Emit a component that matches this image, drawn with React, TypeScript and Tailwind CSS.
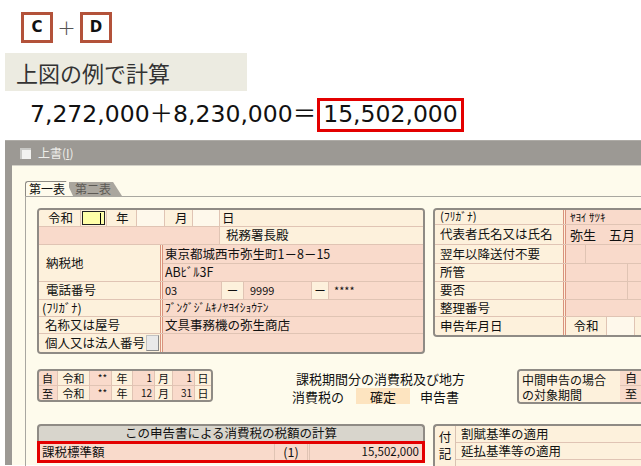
import React from 'react';

const jp = "font-['Noto_Sans_CJK_JP',sans-serif]";

function Cell({ className = '', children }: { className?: string; children?: React.ReactNode }) {
  return <div className={`flex items-center shrink-0 border-r border-[#e0c4b4] ${className}`}>{children}</div>;
}

function TaxpayerBox() {
  return (
    <div className="w-[388px] shrink-0 border-2 border-[#8f8b85] rounded-[4px] overflow-hidden text-[12.5px] leading-none bg-[#f9dacb]">
      {/* 令和 年 月 日 */}
      <div className="flex h-[17px] border-b border-[#e0c4b4]">
        <Cell className="w-[42px] pl-[9px] bg-[#fdf1dc]">令和</Cell>
        <Cell className="w-[26px] p-[1px] bg-[#fdf1dc]">
          <div className="w-full h-full bg-[#ffffa8] border border-[#222] flex justify-end items-center pr-[3px]">
            <div className="w-px h-[11px] bg-black" />
          </div>
        </Cell>
        <Cell className="w-[30px] pl-[9px] bg-[#fdf1dc]">年</Cell>
        <Cell className="w-[28px] bg-[#fef8eb]" />
        <Cell className="w-[28px] pl-[10px] bg-[#fdf1dc]">月</Cell>
        <Cell className="w-[27px] bg-[#fef8eb]" />
        <div className="flex-1 flex items-center pl-[2px] bg-[#fdf1dc]">日</div>
      </div>
      <div className="flex h-[18px] border-b border-[#e0c4b4]">
        <Cell className="w-[181px]" />
        <div className="flex-1 flex items-center pl-[6px] bg-[#fdf1dc]">税務署長殿</div>
      </div>
      {/* 納税地 */}
      <div className="flex h-[37px] border-b border-[#e0c4b4]">
        <div className="w-[124px] shrink-0 flex items-center pl-[7px] bg-[#fdf1dc] border-r-[3px] border-double border-[#d9927d]">納税地</div>
        <div className="flex-1 flex flex-col">
          <div className="h-[19px] flex items-center pl-[2px] border-b border-[#e0c4b4]">東京都城西市弥生町1－8－15</div>
          <div className="h-[18px] flex items-center pl-[2px]">ABﾋﾞﾙ3F</div>
        </div>
      </div>
      <div className="flex h-[18px] border-b border-[#e0c4b4]">
        <div className="w-[124px] shrink-0 flex items-center pl-[7px] bg-[#fdf1dc] border-r-[3px] border-double border-[#d9927d]">電話番号</div>
        <Cell className="w-[59px] pl-[2px] text-[11px]">03</Cell>
        <Cell className="w-[22px] justify-center bg-[#fdf1dc]">－</Cell>
        <Cell className="w-[68px] pl-[6px] text-[11px]">9999</Cell>
        <Cell className="w-[17px] justify-center bg-[#fdf1dc]">－</Cell>
        <div className="flex-1 flex items-center pl-[5px] text-[11px]">****</div>
      </div>
      <div className="flex h-[17px] border-b border-[#e0c4b4]">
        <div className="w-[124px] shrink-0 flex items-center pl-[3px] bg-[#fdf1dc] border-r-[3px] border-double border-[#d9927d]">(ﾌﾘｶﾞﾅ)</div>
        <div className="flex-1 flex items-center pl-[2px] text-[11.5px]">ﾌﾞﾝｸﾞｼﾞﾑｷﾉﾔﾖｲｼｮｳﾃﾝ</div>
      </div>
      <div className="flex h-[17px] border-b border-[#e0c4b4]">
        <div className="w-[124px] shrink-0 flex items-center pl-[6px] bg-[#fdf1dc] border-r-[3px] border-double border-[#d9927d]">名称又は屋号</div>
        <div className="flex-1 flex items-center pl-[2px]">文具事務機の弥生商店</div>
      </div>
      <div className="flex h-[18px]">
        <div className="w-[124px] shrink-0 flex items-center justify-between pl-[6px] pr-[1px] bg-[#fdf1dc] border-r-[3px] border-double border-[#d9927d]">
          <span>個人又は法人番号</span>
          <div className="w-[13px] h-[16px] bg-[#e9e9e9] border border-[#c2c2c2] border-b-[#8a8a8a] border-r-[#8a8a8a]" />
        </div>
        <div className="flex-1" />
      </div>
    </div>
  );
}

function RepresentativeBox() {
  const label = 'w-[131px] shrink-0 flex items-center pl-[5px] bg-[#fdf1dc] border-r-[3px] border-double border-[#d9927d]';
  return (
    <div className="w-[230px] shrink-0 border-2 border-r-0 border-[#8f8b85] rounded-l-[4px] overflow-hidden text-[12.5px] leading-none bg-[#f9dacb]">
      <div className="flex h-[15px] border-b border-[#e0c4b4]">
        <div className={`${label} pl-[2px] text-[11.5px]`}>(ﾌﾘｶﾞﾅ)</div>
        <div className="flex-1 flex items-center pl-[4px] text-[11px]">ﾔﾖｲ ｻﾂｷ</div>
      </div>
      <div className="flex h-[20px] border-b border-[#e0c4b4]">
        <div className={label}>代表者氏名又は氏名</div>
        <div className="flex-1 flex items-center pl-[4px] text-[13px]">弥生　五月</div>
      </div>
      <div className="flex h-[19px] border-b border-[#e0c4b4]">
        <div className={label}>翌年以降送付不要</div>
        <Cell className="w-[20px]" />
        <div className="flex-1" />
      </div>
      <div className="flex h-[18px] border-b border-[#e0c4b4]">
        <div className={label}>所管</div>
        <Cell className="w-[62px]" />
        <div className="flex-1" />
      </div>
      <div className="flex h-[18px] border-b border-[#e0c4b4]">
        <div className={label}>要否</div>
        <Cell className="w-[62px]" />
        <div className="flex-1" />
      </div>
      <div className="flex h-[17px] border-b border-[#e0c4b4]">
        <div className={label}>整理番号</div>
        <div className="flex-1" />
      </div>
      <div className="flex h-[18px]">
        <div className={label}>申告年月日</div>
        <Cell className="w-[41px] justify-center bg-[#fdf1dc]">令和</Cell>
        <Cell className="w-[28px] bg-[#fef8eb]" />
        <div className="flex-1 bg-[#fdf1dc]" />
      </div>
    </div>
  );
}

function PeriodRow({ head, m, d }: { head: string; m: string; d: string }) {
  return (
    <div className="flex h-[14px]">
      <Cell className="w-[19px] pl-[3px]">{head}</Cell>
      <Cell className="w-[32px] justify-center bg-[#fdf1dc]">令和</Cell>
      <Cell className="w-[22px] justify-center pl-[4px] text-[10px]">**</Cell>
      <Cell className="w-[21px] justify-center bg-[#fdf1dc]">年</Cell>
      <Cell className="w-[22px] justify-end pr-[2px] text-[10px]">{m}</Cell>
      <Cell className="w-[18px] justify-center bg-[#fdf1dc]">月</Cell>
      <Cell className="w-[22px] justify-end pr-[2px] text-[10px]">{d}</Cell>
      <div className="flex-1 flex items-center justify-center bg-[#fdf1dc]">日</div>
    </div>
  );
}

export default function App() {
  return (
    <div className={`w-[641px] h-[466px] overflow-hidden bg-white text-[#111] ${jp}`}>
      {/* C + D */}
      <div className="flex items-center pt-[12px] pl-[21px] h-[43px]">
        <div className="w-[32px] h-[31px] border-[3px] border-[#b3523a] flex items-center justify-center font-bold text-[15px] font-['DejaVu_Sans',sans-serif]">C</div>
        <div className="w-[27px] text-center text-[22px] text-[#555] font-['DejaVu_Sans',sans-serif] font-light leading-none">+</div>
        <div className="w-[32px] h-[31px] border-[3px] border-[#b3523a] flex items-center justify-center font-bold text-[15px] font-['DejaVu_Sans',sans-serif]">D</div>
      </div>
      <div className="mt-[10px] ml-[5px] w-[242px] h-[38px] bg-[#ecebe1] flex items-center pl-[11px] text-[22px] text-[#333]">
        上図の例で計算
      </div>
      <div className="mt-[7px] h-[34px] flex items-center pl-[30px] text-[23.5px] font-['DejaVu_Sans','Noto_Sans_CJK_JP',sans-serif] text-[#111]">
        <span>7,272,000＋8,230,000＝</span>
        <span className="ml-[1px] h-[34px] border-[3px] border-[#e30000] flex items-center px-[3px]">15,502,000</span>
      </div>

      {/* window */}
      <div className="mt-[8px] ml-[5px] bg-[#9c9994]">
        <div className="h-[25px] flex items-center pl-[15px] border-t border-[#aeaba6]">
          <div className="w-[11px] h-[11px] bg-[#f2f2f0] border-l-2 border-t-2 border-[#c9c9c6]" />
          <span className="ml-[7px] text-[12px] text-[#eeeeea]">上書(<span className="underline">I</span>)</span>
        </div>
        <div className="ml-[7px] h-[300px] bg-[#fefbec] border-t border-[#d3d1c8] pl-[13px]">
          <div className="flex items-end h-[30px]">
            <div className="relative z-10 h-[15px] pl-[3px] pr-[8px] bg-[#fefbec] border-l border-t border-[#8d8a84] rounded-tl-[3px] text-[12px] leading-[14px] [clip-path:polygon(0_0,calc(100%-7px)_0,100%_100%,0_100%)]">
              第一表
            </div>
            <div className="-ml-[4px] h-[14px] pl-[6px] pr-[11px] bg-[#aaa69e] text-[12px] leading-[14px] text-[#5d5a55] [clip-path:polygon(0_0,calc(100%-9px)_0,100%_100%,0_100%)]">
              第二表
            </div>
          </div>
          <div className="border-l border-t border-[#a9a7a0] pl-[11px] pt-[11px] h-[270px]">
            <div className="flex items-start gap-[8px]">
              <TaxpayerBox />
              <RepresentativeBox />
            </div>

            <div className="mt-[15px] h-[36px] flex items-start">
              <div className="w-[176px] h-[33px] shrink-0 border-2 border-[#8f8b85] rounded-[4px] overflow-hidden bg-[#f9dacb] text-[11px] leading-none">
                <div className="border-b border-[#e0c4b4]">
                  <PeriodRow head="自" m="1" d="1" />
                </div>
                <PeriodRow head="至" m="12" d="31" />
              </div>
              <div className="ml-[79px] w-[220px] shrink-0 text-[13px] leading-none">
                <div className="pl-[4px] pt-[3px] h-[17px]">課税期間分の消費税及び地方</div>
                <div className="flex items-center mt-[2px] h-[16px]">
                  <span>消費税の</span>
                  <span className="ml-[12px] w-[54px] h-[16px] bg-[#fde4c0] flex items-center justify-center">確定</span>
                  <span className="ml-[10px]">申告書</span>
                </div>
              </div>
              <div className="ml-[5px] w-[140px] h-[35px] shrink-0 border-2 border-r-0 border-[#8f8b85] rounded-l-[4px] overflow-hidden flex text-[12px] leading-none">
                <div className="w-[101px] shrink-0 bg-[#fdf1dc] pl-[3px] pt-[2px] flex flex-col gap-[2px]">
                  <div className="leading-[13px]">中間申告の場合</div>
                  <div className="leading-[13px]">の対象期間</div>
                </div>
                <div className="flex-1 bg-[#f9dacb] flex flex-col">
                  <div className="h-[15px] flex items-center pl-[5px] border-b border-[#e0c4b4]">自</div>
                  <div className="flex-1 flex items-center pl-[5px]">至</div>
                </div>
              </div>
            </div>

            <div className="mt-[19px] flex items-start gap-[8px]">
              <div className="w-[388px] shrink-0 text-[12.5px] leading-none">
                <div className="h-[17px] bg-[#d8d5cc] border-2 border-b-0 border-[#8f8b85] rounded-t-[4px] flex items-center justify-center">
                  この申告書による消費税の税額の計算
                </div>
                <div className="h-[22px] border-[3px] border-[#e30000] flex bg-[#f9dacb]">
                  <Cell className="w-[235px] pl-[2px]">課税標準額</Cell>
                  <Cell className="w-[35px] justify-center border-r-[3px] border-double border-[#e0c0b0]">(1)</Cell>
                  <div className="flex-1 flex items-center justify-end pr-[3px] text-[11.5px]">15,502,000</div>
                </div>
              </div>
              <div className="w-[230px] h-[50px] shrink-0 border-2 border-r-0 border-[#8f8b85] rounded-tl-[4px] bg-[#fdf1dc] flex text-[12.5px] leading-none">
                <div className="w-[21px] shrink-0 flex flex-col items-center pt-[5px] gap-[4px] border-r border-[#d9c2b2] text-[12.5px] leading-none">
                  <div className="h-[13px]">付</div>
                  <div className="h-[13px]">記</div>
                </div>
                <div className="flex-1 flex flex-col">
                  <div className="h-[17px] flex items-center pl-[5px] border-b border-[#e0c4b4]">割賦基準の適用</div>
                  <div className="h-[17px] flex items-center pl-[5px] border-b border-[#e0c4b4]">延払基準等の適用</div>
                  <div className="flex-1" />
                </div>
              </div>
            </div>
          </div>
        </div>
      </div>
    </div>
  );
}
